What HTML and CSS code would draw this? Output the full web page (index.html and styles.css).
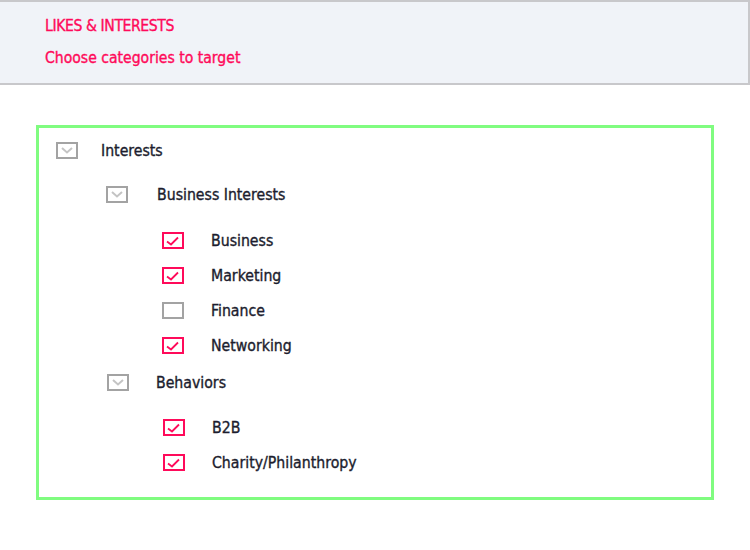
FILE: index.html
```html
<!DOCTYPE html>
<html>
<head>
<meta charset="utf-8">
<link rel="stylesheet" href="styles.css">
</head>
<body>
<header class="header">
  <div class="title">LIKES &amp; INTERESTS</div>
  <div class="subtitle">Choose categories to target</div>
</header>
<main class="panel">
  <div class="row level0">
    <svg class="box" width="22" height="17" viewBox="0 0 22 17"><rect x="1" y="1" width="20" height="15" fill="none" stroke="#a3a3a3" stroke-width="2"/><polyline points="6,6 11,10.5 16,6" fill="none" stroke="#c4c4c4" stroke-width="2"/></svg>
    <span class="label">Interests</span>
  </div>
  <div class="row level1 first">
    <svg class="box" width="22" height="17" viewBox="0 0 22 17"><rect x="1" y="1" width="20" height="15" fill="none" stroke="#a3a3a3" stroke-width="2"/><polyline points="6,6 11,10.5 16,6" fill="none" stroke="#c4c4c4" stroke-width="2"/></svg>
    <span class="label">Business Interests</span>
  </div>
  <div class="group g1">
    <div class="row level2">
      <svg class="box" width="22" height="17" viewBox="0 0 22 17"><rect x="1" y="1" width="20" height="15" fill="none" stroke="#ff0a5a" stroke-width="2"/><polyline points="5,9.5 9,12.5 16,5.5" fill="none" stroke="#ff0a5a" stroke-width="1.8"/></svg>
      <span class="label">Business</span>
    </div>
    <div class="row level2">
      <svg class="box" width="22" height="17" viewBox="0 0 22 17"><rect x="1" y="1" width="20" height="15" fill="none" stroke="#ff0a5a" stroke-width="2"/><polyline points="5,9.5 9,12.5 16,5.5" fill="none" stroke="#ff0a5a" stroke-width="1.8"/></svg>
      <span class="label">Marketing</span>
    </div>
    <div class="row level2">
      <svg class="box" width="22" height="17" viewBox="0 0 22 17"><rect x="1" y="1" width="20" height="15" fill="none" stroke="#a3a3a3" stroke-width="2"/></svg>
      <span class="label">Finance</span>
    </div>
    <div class="row level2">
      <svg class="box" width="22" height="17" viewBox="0 0 22 17"><rect x="1" y="1" width="20" height="15" fill="none" stroke="#ff0a5a" stroke-width="2"/><polyline points="5,9.5 9,12.5 16,5.5" fill="none" stroke="#ff0a5a" stroke-width="1.8"/></svg>
      <span class="label">Networking</span>
    </div>
  </div>
  <div class="row level1 second">
    <svg class="box" width="22" height="17" viewBox="0 0 22 17"><rect x="1" y="1" width="20" height="15" fill="none" stroke="#a3a3a3" stroke-width="2"/><polyline points="6,6 11,10.5 16,6" fill="none" stroke="#c4c4c4" stroke-width="2"/></svg>
    <span class="label">Behaviors</span>
  </div>
  <div class="group g2">
    <div class="row level2b">
      <svg class="box" width="22" height="17" viewBox="0 0 22 17"><rect x="1" y="1" width="20" height="15" fill="none" stroke="#ff0a5a" stroke-width="2"/><polyline points="5,9.5 9,12.5 16,5.5" fill="none" stroke="#ff0a5a" stroke-width="1.8"/></svg>
      <span class="label">B2B</span>
    </div>
    <div class="row level2b">
      <svg class="box" width="22" height="17" viewBox="0 0 22 17"><rect x="1" y="1" width="20" height="15" fill="none" stroke="#ff0a5a" stroke-width="2"/><polyline points="5,9.5 9,12.5 16,5.5" fill="none" stroke="#ff0a5a" stroke-width="1.8"/></svg>
      <span class="label">Charity/Philanthropy</span>
    </div>
  </div>
</main>
</body>
</html>
```
FILE: styles.css
```css
* { box-sizing: border-box; }
body {
  margin: 0;
  background: #ffffff;
  font-family: "DejaVu Sans Condensed", "DejaVu Sans", sans-serif;
  color: #1c1d2e;
}
.header {
  height: 85px;
  background: #f0f3f8;
  border-top: 2px solid #c8c8cb;
  border-bottom: 2px solid #c8c8cb;
  border-right: 2px solid #c8c8cb;
  padding: 15px 0 0 45px;
  color: #ff0a5a;
  font-size: 15.6px;
  -webkit-text-stroke: 0.35px currentColor;
}
.title { height: 18px; line-height: 18px; letter-spacing: -0.4px; }
.subtitle { margin-top: 14px; height: 18px; line-height: 18px; }
.panel {
  margin: 40px 0 0 36px;
  width: 678px;
  border: 3px solid #80fc80;
  padding: 5px 0 17px 17px;
}
.row {
  height: 35px;
  display: flex;
  align-items: center;
  font-size: 15.7px;
  -webkit-text-stroke: 0.35px currentColor;
}
.box { flex: none; display: block; }
.label { line-height: 18px; }
.level0 .box { margin-right: 23px; }
.level1 { padding-left: 50px; }
.level1 .box { margin-right: 29px; }
.level1.first { margin-top: 9px; }
.level1.second { margin-top: 2px; padding-left: 51px; }
.level1.second .box { margin-right: 27px; }
.g1 { margin-top: 11px; }
.g2 { margin-top: 10px; }
.level2 { padding-left: 106px; }
.level2 .box { margin-right: 27px; }
.level2b { padding-left: 107px; }
.level2b .box { margin-right: 27px; }
```
